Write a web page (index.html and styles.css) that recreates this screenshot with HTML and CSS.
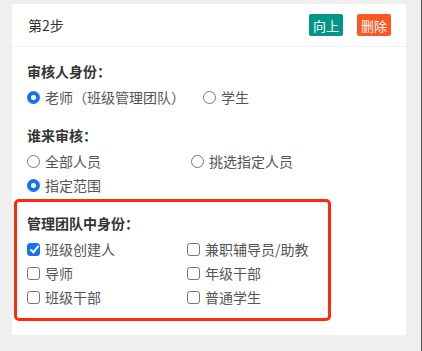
FILE: index.html
```html
<!DOCTYPE html>
<html lang="zh">
<head>
<meta charset="utf-8">
<link rel="stylesheet" href="styles.css">
</head>
<body>
<div class="card">
  <div class="card-head">
    <span class="title">第2步</span>
    <div class="btns">
      <span class="btn btn-up">向上</span>
      <span class="btn btn-del">删除</span>
    </div>
  </div>
  <div class="section first">
    <div class="label">审核人身份：</div>
    <div class="row">
      <span class="opt opt-inline"><span class="radio on"></span>老师（班级管理团队）</span>
      <span class="opt"><span class="radio"></span>学生</span>
    </div>
  </div>
  <div class="section">
    <div class="label">谁来审核：</div>
    <div class="row">
      <span class="opt col1"><span class="radio"></span>全部人员</span>
      <span class="opt"><span class="radio"></span>挑选指定人员</span>
    </div>
    <div class="row">
      <span class="opt"><span class="radio on"></span>指定范围</span>
    </div>
  </div>
  <div class="box">
    <div class="label">管理团队中身份：</div>
    <div class="row">
      <span class="opt col1b"><span class="check on"></span>班级创建人</span>
      <span class="opt"><span class="check"></span>兼职辅导员/助教</span>
    </div>
    <div class="row">
      <span class="opt col1b"><span class="check"></span>导师</span>
      <span class="opt"><span class="check"></span>年级干部</span>
    </div>
    <div class="row">
      <span class="opt col1b"><span class="check"></span>班级干部</span>
      <span class="opt"><span class="check"></span>普通学生</span>
    </div>
  </div>
</div>
</body>
</html>
```
FILE: styles.css
```css
html, body {
  margin: 0;
  padding: 0;
  background: #efefef;
  font-family: "Noto Sans CJK SC", "Noto Sans", sans-serif;
  font-size: 14px;
}
body {
  padding: 4px 0 0 12px;
  width: 422px;
  height: 351px;
  box-sizing: border-box;
  border-right: 1px solid #555;
  overflow: hidden;
}
.card {
  width: 394px;
  background: #fff;
  border-radius: 2px;
  padding-bottom: 14px;
}
.card-head {
  height: 42px;
  border-bottom: 1px solid #f2f2f2;
  display: flex;
  align-items: center;
  justify-content: space-between;
  padding: 0 15px 0 16px;
}
.title {
  color: #333;
  font-size: 14px;
}
.btns {
  display: flex;
  gap: 14px;
}
.btn {
  display: inline-flex;
  align-items: center;
  justify-content: center;
  width: 34px;
  height: 22px;
  color: #fff;
  font-size: 13px;
  border-radius: 2px;
}
.btn-up { background: #009688; }
.btn-del { background: #ff5722; }
.section {
  padding: 0 15px;
  margin-top: 16px;
}
.section.first {
  margin-top: 14px;
}
.label {
  height: 20px;
  line-height: 20px;
  font-weight: bold;
  color: #333;
  margin-bottom: 4px;
}
.row {
  height: 24px;
  display: flex;
  align-items: center;
  color: #555;
}
.opt {
  display: inline-flex;
  align-items: center;
  line-height: 20px;
}
.opt-inline { margin-right: 18px; }
.col1 { width: 164px; }
.col1b { width: 160px; }
.radio {
  width: 13px;
  height: 13px;
  box-sizing: border-box;
  border: 1px solid #777;
  border-radius: 50%;
  margin-right: 5px;
  flex: none;
}
.radio.on {
  border: 4px solid #1673ef;
  background: #fff;
}
.check {
  width: 13px;
  height: 13px;
  box-sizing: border-box;
  border: 1px solid #777;
  border-radius: 3px;
  margin-right: 5px;
  flex: none;
  position: relative;
}
.check.on {
  background: #1673ef;
  border-color: #1673ef;
}
.check.on::after {
  content: "";
  position: absolute;
  left: 3.5px;
  top: 0.5px;
  width: 3px;
  height: 7px;
  border: solid #fff;
  border-width: 0 2px 2px 0;
  transform: rotate(40deg);
}
.box {
  margin: 2px 0 0 2px;
  width: 317px;
  box-sizing: border-box;
  border: 3px solid #ff2a0c;
  border-radius: 5px;
  padding: 11px 10px 9px;
}
```
